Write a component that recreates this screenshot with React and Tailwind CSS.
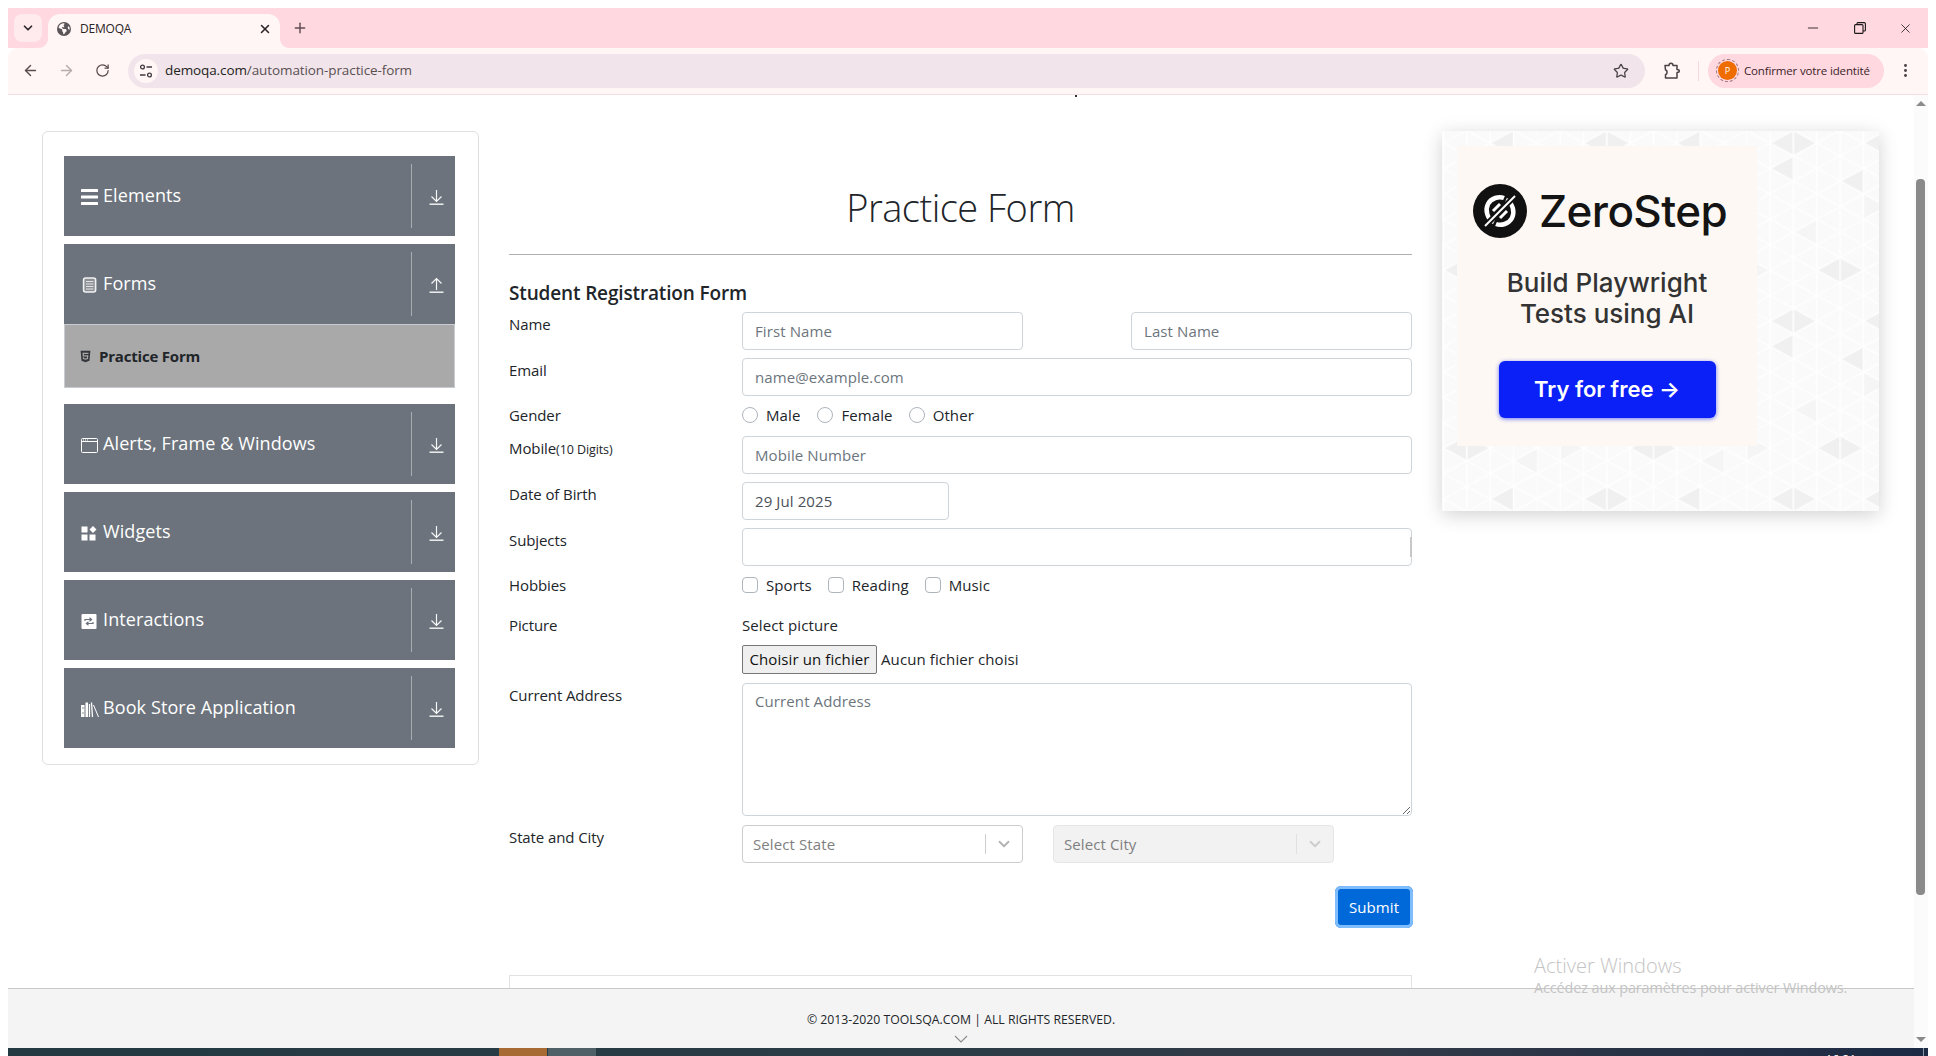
import { ArrowLeft, ArrowRight, RotateCw, Star, Plus, X, ChevronDown, Minus, EllipsisVertical } from "lucide-react";
import { FaHtml5 } from "react-icons/fa";
import { FaEarthAmericas } from "react-icons/fa6";

const BASE = "font-['Open_Sans','Liberation_Sans',sans-serif]";
const INPUT = "h-[38px] rounded-[4px] border border-[#ced4da] bg-white px-3 text-[15px] tracking-[0.1px] text-[#495057] outline-none placeholder:text-[#6c757d]";

function BarsIcon() {
  return (
    <svg width="17" height="16" viewBox="0 0 17 16" fill="white">
      <rect x="0" y="0" width="17" height="3" rx="0.5" />
      <rect x="0" y="6.5" width="17" height="3" rx="0.5" />
      <rect x="0" y="13" width="17" height="3" rx="0.5" />
    </svg>
  );
}

function DocIcon() {
  return (
    <svg width="17" height="16" viewBox="0 0 17 16" fill="none">
      <rect x="2.6" y="1" width="12" height="14" rx="2" fill="#8d9197" stroke="#f2f2f2" strokeWidth="1.6" />
      <path d="M5 4.5h7.4M5 7h7.4M5 9.5h7.4M5 12h7.4" stroke="#e4e4e4" strokeWidth="1.1" />
    </svg>
  );
}

function WindowIcon() {
  return (
    <svg width="17" height="15" viewBox="0 0 17 15" fill="none">
      <rect x="0.5" y="0.5" width="16" height="14" rx="1" stroke="white" />
      <path d="M0.5 3.5h16" stroke="white" />
      <path d="M2 2h1M4 2h1M6 2h1" stroke="white" />
    </svg>
  );
}

function WidgetsIcon() {
  return (
    <svg width="16" height="15" viewBox="0 0 16 15" fill="white">
      <rect x="0.5" y="0.5" width="6" height="6" />
      <path d="M12 0l3.5 3.5L12 7 8.5 3.5z" />
      <rect x="0.5" y="8.5" width="6" height="6" />
      <rect x="8.5" y="8.5" width="6" height="6" />
    </svg>
  );
}

function InteractIcon() {
  return (
    <svg width="16" height="15" viewBox="0 0 16 15">
      <rect x="0.5" y="0" width="15" height="15" rx="1" fill="white" />
      <path d="M4 7V5.5h6M8.5 3.8L10.6 5.5 8.5 7.2M12 8v1.5H6M7.5 7.8L5.4 9.5l2.1 1.7" stroke="#6c737c" strokeWidth="1.2" fill="none" />
    </svg>
  );
}

function BooksIcon() {
  return (
    <svg width="18" height="16" viewBox="0 0 18 16" fill="none" stroke="white">
      <path d="M0 4h3.5v12H0zM4.5 1.5h2.5V16H4.5z" fill="white" stroke="none" />
      <path d="M1 7h2M1 12h2" stroke="#6c737c" strokeWidth="0.8" />
      <path d="M8.5 3v13M10.5 1.5l1 14.5" strokeWidth="1.3" />
      <path d="M12.5 4l5 12" strokeWidth="1" />
    </svg>
  );
}

const GROUPS = [
  { name: "Elements", icon: <BarsIcon /> },
  { name: "Forms", icon: <DocIcon />, open: true },
  { name: "Alerts, Frame & Windows", icon: <WindowIcon /> },
  { name: "Widgets", icon: <WidgetsIcon /> },
  { name: "Interactions", icon: <InteractIcon /> },
  { name: "Book Store Application", icon: <BooksIcon /> },
];

function Chevron({ up }) {
  return (
    <svg width="15" height="16" viewBox="0 0 15 16" fill="none" stroke="white" strokeWidth="1.2" className="opacity-95">
      {up ? (
        <path d="M7.5 13V2M2.5 6.5l5-5 5 5" />
      ) : (
        <path d="M7.5 1v11M2.5 7.5l5 5 5-5" />
      )}
      <path d="M0.5 15.2h14" strokeWidth="1.4" />
    </svg>
  );
}

function GroupHeader({ group }) {
  return (
    <div className="flex h-20 items-center bg-[#6c737c] text-white">
      <div className="flex flex-1 items-center pl-[17px]">
        <span className="flex w-[22px] shrink-0 translate-y-[1px] justify-start">{group.icon}</span>
        <span className="-translate-y-px text-[18px] leading-6 tracking-[0.1px]">{group.name}</span>
      </div>
      <div className="h-16 w-px bg-[#a9adb2]" />
      <div className="flex w-[43px] translate-y-px justify-center pl-[5px]">
        <Chevron up={group.open} />
      </div>
    </div>
  );
}

function Sidebar() {
  return (
    <aside className="h-[634px] w-[437px] shrink-0 rounded-[6px] border border-[#dfdfdf] pl-[21px] pr-[23px] pt-6">
      <div className="flex flex-col gap-2">
        {GROUPS.map((group) => (
          <div key={group.name} className={group.open ? "mb-2" : ""}>
            <GroupHeader group={group} />
            {group.open && (
              <div className="flex h-16 items-center gap-[7px] border border-[#c8ccd0] bg-[#a9a9a9] pl-[14px] text-[15px] font-bold tracking-[-0.2px] text-[#212529]">
                <FaHtml5 className="text-[13px] text-[#33373b]" />
                Practice Form
              </div>
            )}
          </div>
        ))}
      </div>
    </aside>
  );
}

function Row({ label, hint, children, className = "" }) {
  return (
    <div className={`flex ${className}`}>
      <div className="w-[233px] shrink-0 text-[15px] leading-6 tracking-[-0.1px] text-[#212529]">
        {label}
        {hint && <span className="text-[12.5px] tracking-[-0.1px]">{hint}</span>}
      </div>
      {children}
    </div>
  );
}

function Option({ type, label, className = "" }) {
  return (
    <label className={`flex items-center gap-2 text-[15px] leading-6 tracking-[0.1px] text-[#212529] ${className}`}>
      <span className={`size-4 border border-[#adb5bd] bg-white ${type === "radio" ? "rounded-full" : "rounded-[4px]"}`} />
      {label}
    </label>
  );
}

function Select({ text, disabled, className = "" }) {
  return (
    <div className={`flex h-[38px] items-center rounded-[4px] border pl-[10px] text-[15px] tracking-[0.1px] ${disabled ? "border-[#e6e6e6] bg-[#f2f2f2] text-[#808080]" : "border-[#cccccc] bg-white text-[#808080]"} ${className}`}>
      <span className="flex-1">{text}</span>
      <span className={`h-5 w-px ${disabled ? "bg-[#e0e0e0]" : "bg-[#cccccc]"}`} />
      <span className="flex w-9 justify-center">
        <ChevronDown size={18} strokeWidth={2.4} className={disabled ? "text-[#cccccc]" : "text-[#b3b3b3]"} />
      </span>
    </div>
  );
}

function PracticeForm() {
  return (
    <main className="w-[903px] shrink-0">
      <div className="border-b border-[#b0b0b0] pb-[23px] pt-[52px] text-center text-[38px] font-light leading-[48px] tracking-[-0.5px] text-[#212529]">
        Practice Form
      </div>
      <h5 className="mt-[26px] text-[19px] font-semibold leading-6 tracking-[-0.15px] text-[#212529]">Student Registration Form</h5>
      <form className="mt-[7px] flex flex-col gap-2">
        <Row label="Name">
          <input placeholder="First Name" className={`${INPUT} w-[281px]`} />
          <input placeholder="Last Name" className={`${INPUT} ml-[108px] w-[281px]`} />
        </Row>
        <Row label="Email">
          <input placeholder="name@example.com" className={`${INPUT} w-[670px]`} />
        </Row>
        <Row label="Gender" className="-mt-px mb-px">
          <div className="flex gap-4">
            <Option type="radio" label="Male" className="mr-px" />
            <Option type="radio" label="Female" />
            <Option type="radio" label="Other" />
          </div>
        </Row>
        <Row label="Mobile" hint="(10 Digits)">
          <input placeholder="Mobile Number" className={`${INPUT} w-[670px]`} />
        </Row>
        <Row label="Date of Birth">
          <input defaultValue="29 Jul 2025" className={`${INPUT} w-[207px]`} />
        </Row>
        <Row label="Subjects">
          <div className="relative">
            <input className={`${INPUT} w-[670px]`} />
            <span className="absolute right-0 top-[9px] h-5 w-[2px] bg-[#c8c8c8]" />
          </div>
        </Row>
        <Row label="Hobbies" className="-mt-px">
          <div className="flex gap-4">
            <Option type="checkbox" label="Sports" />
            <Option type="checkbox" label="Reading" />
            <Option type="checkbox" label="Music" />
          </div>
        </Row>
        <Row label="Picture" className="mt-2">
          <div className="text-[15px] tracking-[0.1px] text-[#212529]">
            <div className="leading-6">Select picture</div>
            <div className="mt-2 flex h-[29px] items-center gap-[4px]">
              <span className="flex h-[29px] w-[135px] items-center justify-center rounded-[2px] border border-[#767676] bg-[#efefef] text-[15px] text-[#111]">Choisir un fichier</span>
              <span>Aucun fichier choisi</span>
            </div>
          </div>
        </Row>
        <Row label="Current Address" className="mt-px">
          <textarea placeholder="Current Address" className="h-[133px] w-[670px] rounded-[4px] border border-[#ced4da] px-3 py-[6px] text-[15px] tracking-[0.1px] outline-none placeholder:text-[#6c757d]" />
        </Row>
        <Row label="State and City" className="mt-px">
          <Select text="Select State" className="w-[281px]" />
          <Select text="Select City" disabled className="ml-[30px] w-[281px]" />
        </Row>
      </form>
      <div className="mt-[23px] flex justify-end">
        <button className="-mr-px h-[42px] w-[78px] rounded-[6px] bg-[#0069d9] text-[15px] tracking-[0.1px] text-white ring-[3px] ring-inset ring-[#80bdff]">
          Submit
        </button>
      </div>
      <div className="mt-[47px] h-10 border border-[#e2e2e2]" />
    </main>
  );
}

const COL = 70 / 3;
const SIDE = 178 / 7;
const TILE_W = COL * 8;
const TILE_H = 178;
const DARK = "#f0f0f0";
const SOFT = "#f5f5f5";

// shaded triangles of the tile: column, row, side the flat edge is on, fill
const SHADED = [
  [2, 0, "l", DARK], [3, 0, "r", DARK], [2, 1, "l", DARK], [5, 1, "l", DARK],
  [4, 5, "l", DARK], [5, 5, "r", DARK], [6, 0, "l", DARK],
  [0, 2, "r", SOFT], [3, 3, "l", SOFT], [6, 3, "r", SOFT], [1, 5, "r", SOFT], [7, 5, "l", SOFT],
];

function triangle(col, row, dir, fill) {
  const y = row * SIDE + (col % 2 ? SIDE / 2 : 0);
  const x0 = col * COL;
  const x1 = x0 + COL;
  const d =
    dir === "r"
      ? `M${x0} ${y}V${y + SIDE}L${x1} ${y + SIDE / 2}z`
      : `M${x1} ${y + SIDE / 2}V${y + SIDE * 1.5}L${x0} ${y + SIDE}z`;
  return <path key={`${col}-${row}-${dir}`} d={d} fill={fill} />;
}

function AdPattern() {
  const rows = Array.from({ length: 22 }, (_, i) => i - 7);
  return (
    <svg className="absolute inset-0 size-full blur-[0.4px]" aria-hidden="true">
      <defs>
        <pattern id="tri" width={TILE_W} height={TILE_H} patternUnits="userSpaceOnUse" patternTransform="translate(94.8 -13.4)">
          <rect width={TILE_W} height={TILE_H} fill="#fafafa" />
          {SHADED.map(([c, r, dir, fill]) => triangle(c, r, dir, fill))}
          <g stroke="#ffffff" strokeWidth="1.5">
            {[0, 1, 2, 3, 4, 5, 6, 7].map((c) => (
              <path key={c} d={`M${c * COL} 0V${TILE_H}`} />
            ))}
            {rows.map((j) => (
              <g key={j}>
                <path d={`M0 ${j * SIDE}L${TILE_W} ${(j + 4) * SIDE}`} />
                <path d={`M0 ${j * SIDE}L${TILE_W} ${(j - 4) * SIDE}`} />
              </g>
            ))}
          </g>
        </pattern>
      </defs>
      <rect width="100%" height="100%" fill="url(#tri)" />
    </svg>
  );
}

function ZeroLogo() {
  return (
    <svg width="54" height="54" viewBox="0 0 54 54" fill="none" className="shrink-0">
      <circle cx="27" cy="27" r="27" fill="#111111" />
      <path d="M21 38C14 35 12 26 15 20C18 14 26 12 31 14" stroke="white" strokeWidth="4.5" />
      <path d="M33 16C40 19 42 28 39 34C36 40 28 42 23 40" stroke="white" strokeWidth="4.5" />
      <path d="M12 42L42 12" stroke="#111111" strokeWidth="6" />
      <path d="M12 42L42 12" stroke="white" strokeWidth="2" />
      <path d="M20 27L27 20M27 34L34 27" stroke="white" strokeWidth="3" />
    </svg>
  );
}

function Ad() {
  return (
    <div className="relative h-[380px] w-[437px] shrink-0 shadow-[0_4px_18px_rgba(0,0,0,0.18)]">
      <AdPattern />
      <div className="relative ml-[15px] mt-[15px] flex size-[300px] flex-col items-center bg-[#fdf8f3] pt-[38px] font-['Inter',sans-serif]">
        <div className="flex items-center gap-[12px] pr-[14px]">
          <ZeroLogo />
          <span className="text-[44px] font-medium leading-[54px] tracking-[-0.6px] text-[#141414]">ZeroStep</span>
        </div>
        <div className="mt-[29px] text-center text-[26px] font-medium leading-[31px] text-[#333333]">
          Build Playwright
          <br />
          Tests using AI
        </div>
        <div className="mt-[32px] flex h-[57px] w-[217px] items-center justify-center rounded-[6px] bg-[#0a20f6] text-[22px] font-semibold text-white shadow-[0_1px_4px_rgba(10,32,246,0.6)]">
          Try for free →
        </div>
      </div>
    </div>
  );
}

function Scrollbar() {
  return (
    <div className="flex w-[14px] shrink-0 flex-col items-center bg-[#fbfbfb]">
      <div className="mt-[6px] size-0 border-x-[5px] border-b-[5px] border-x-transparent border-b-[#8a8a8a]" />
      <div className="ml-[-1px] mt-[73px] h-[716px] w-[9px] rounded-[4px] bg-[#8a8a8a]" />
      <div className="mt-auto mb-[6px] size-0 border-x-[5px] border-t-[5px] border-x-transparent border-t-[#8a8a8a]" />
    </div>
  );
}

function Tune() {
  return (
    <svg width="14" height="14" viewBox="0 0 14 14" fill="none" stroke="#3f3a3f" strokeWidth="1.3">
      <circle cx="3.5" cy="3" r="1.9" />
      <path d="M7.5 3H13M1 11h5.5" />
      <circle cx="10.5" cy="11" r="1.9" />
    </svg>
  );
}

function PuzzleIcon() {
  return (
    <svg width="18" height="18" viewBox="0 0 18 18" fill="none" stroke="#4a4347" strokeWidth="1.5" strokeLinejoin="round">
      <path d="M2 3.5H6C6 0.5 10 0.5 10 3.5H14V7.5C17 7.5 17 10.5 14 10.5V16H2.5V12.5C4.5 12.5 4.5 8 2.5 8z" />
    </svg>
  );
}

function BrowserChrome() {
  return (
    <header className="relative shrink-0 font-['Open_Sans',sans-serif]">
      <div className="flex h-10 items-start bg-[#ffd8e0]">
        <div className="ml-[6px] mt-[6px] flex size-7 items-center justify-center rounded-lg bg-[#ffeaed]">
          <ChevronDown size={14} strokeWidth={3} className="text-[#2e2a2c]" />
        </div>
        <div className="relative ml-[6px] mt-[6px] flex h-[34px] w-[232px] items-center rounded-t-[12px] bg-[#fff6f5] pb-[4px] pl-[9px]">
          <svg width="10" height="10" viewBox="0 0 10 10" className="absolute bottom-0 right-full" fill="#fff6f5">
            <path d="M10 0C10 6 6 10 0 10H10z" />
          </svg>
          <svg width="10" height="10" viewBox="0 0 10 10" className="absolute bottom-0 left-full" fill="#fff6f5">
            <path d="M0 0C0 6 4 10 10 10H0z" />
          </svg>
          <FaEarthAmericas className="text-[14px] text-[#5a5558]" />
          <span className="ml-[9px] flex-1 text-[12px] tracking-[-0.2px] text-[#2a2426]">DEMOQA</span>
          <X size={14} strokeWidth={2.6} className="mr-[8px] text-[#2a2426]" />
        </div>
        <Plus size={16} strokeWidth={2.2} className="ml-[12px] mt-[12px] text-[#5f4e53]" />
        <div className="ml-auto mr-[15px] mt-3 flex w-[108px] items-center justify-between text-[#1c1719]">
          <Minus size={16} strokeWidth={1.3} />
          <svg width="12" height="12" viewBox="0 0 12 12" fill="none" stroke="currentColor" strokeWidth="1.1">
            <rect x="0.6" y="2.6" width="8.4" height="8.8" rx="1" />
            <path d="M3 2.5V1.6C3 1 3.4 0.6 4 0.6H10.2C10.9 0.6 11.4 1.1 11.4 1.8V8C11.4 8.6 11 9 10.4 9H9" />
          </svg>
          <X size={15} strokeWidth={1.3} />
        </div>
      </div>
      <div className="flex h-[47px] items-center rounded-t-[10px] border-b border-[#f5dde1] bg-[#fff6f5] pb-px">
        <ArrowLeft size={17} strokeWidth={2} className="ml-[14px] text-[#5a4b4f]" />
        <ArrowRight size={17} strokeWidth={2} className="ml-[19px] text-[#b7abae]" />
        <RotateCw size={15} strokeWidth={2} className="ml-[20px] text-[#5a4b4f]" />
        <div className="ml-[18px] flex h-[34px] w-[1517px] items-center rounded-full bg-[#f1e5eb] pl-[6px] pr-4">
          <span className="flex size-6 items-center justify-center rounded-full bg-[#fff6f5]">
            <Tune />
          </span>
          <span className="ml-[7px] flex-1 text-[13.5px] tracking-[-0.1px] text-[#5a5052]">
            <span className="text-[#231f20]">demoqa.com</span>/automation-practice-form
          </span>
          <Star size={16} strokeWidth={1.9} className="text-[#4a4347]" />
        </div>
        <div className="ml-[18px]"><PuzzleIcon /></div>
        <div className="ml-[17px] h-5 w-px bg-[#f7d8de]" />
        <div className="ml-[9px] flex h-[34px] w-[176px] items-center rounded-full bg-[#ffd8e0] pl-[10px]">
          <span className="flex size-[19px] items-center justify-center rounded-full bg-[#ef6c00] text-[9px] text-white outline outline-1 outline-offset-1 outline-dashed outline-[#a2757e]">P</span>
          <span className="ml-[7px] text-[11.5px] tracking-[-0.15px] text-[#3a1e29]">Confirmer votre identité</span>
        </div>
        <EllipsisVertical size={17} strokeWidth={2.2} className="ml-[13px] text-[#4a4347]" />
      </div>
      <span className="absolute left-[1067px] top-[87px] h-[2px] w-[2px] bg-[#333333]" />
    </header>
  );
}

export default function App() {
  return (
    <div className={`${BASE} relative flex h-[1056px] w-[1936px] flex-col overflow-hidden bg-white pl-2 pr-2 pt-2`}>
      <BrowserChrome />
      <div className="flex min-h-0 flex-1">
        <div className="flex min-w-0 flex-1 flex-col">
          <div className="flex min-h-0 flex-1 gap-[30px] overflow-hidden pl-[34px] pt-[36px]">
            <Sidebar />
            <PracticeForm />
            <Ad />
          </div>
          <footer className="flex h-[60px] shrink-0 flex-col items-center border-t border-[#c8c8c8] bg-[#f4f4f4] pt-[22px] text-[12.25px] leading-[18px] text-[#212529]">
            <span>© 2013-2020 TOOLSQA.COM | ALL RIGHTS RESERVED.</span>
            <svg width="14" height="8" viewBox="0 0 14 8" fill="none" stroke="#8a8a8a" strokeWidth="1.1" className="mt-[6px]">
              <path d="M1 1l6 6 6-6" />
            </svg>
          </footer>
        </div>
        <Scrollbar />
      </div>
      <div className="flex h-2 shrink-0 overflow-hidden bg-[linear-gradient(90deg,#233a43_0%,#2a3c46_45%,#333b48_70%,#1c2a44_100%)] pl-[491px]">
        <span className="h-2 w-12 bg-[#a86a33]" />
        <span className="ml-px h-2 w-12 bg-[#4f6167]" />
        <span className="ml-auto mt-[4px] text-[12px] leading-4 text-white">16:21</span>
        <span className="ml-[67px] h-2 w-px bg-[#8a97a8]" />
        <span className="w-[4px]" />
      </div>
      <div className="absolute left-[1534px] top-[953px] font-['Open_Sans',sans-serif] text-[#c4c4c4]">
        <div className="text-[20px] font-light leading-[26px]">Activer Windows</div>
        <div className="text-[14.4px] leading-[18px] tracking-[-0.1px]">Accédez aux paramètres pour activer Windows.</div>
      </div>
    </div>
  );
}
